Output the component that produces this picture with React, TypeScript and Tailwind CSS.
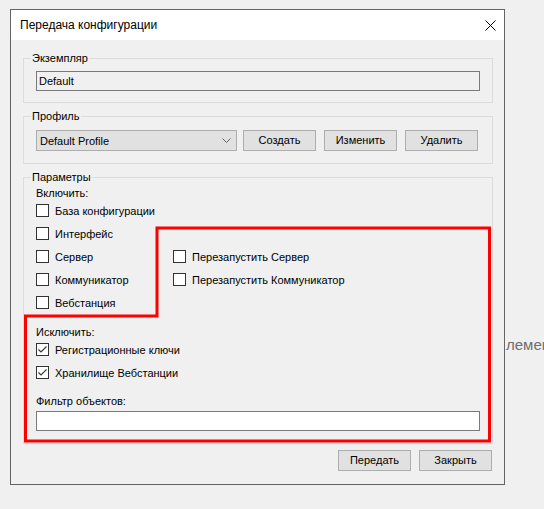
import type { ReactNode } from "react";

function GroupBox({ title, className, children }: { title: string; className: string; children: ReactNode }) {
  return (
    <div className={`relative border border-[#dcdcdc] ${className}`}>
      <span className="absolute -top-[8px] left-[7px] bg-[#f0f0f0] px-[1px] leading-[14px]">{title}</span>
      {children}
    </div>
  );
}

function Button({ label, className = "" }: { label: string; className?: string }) {
  return (
    <button className={`h-[21px] w-[73px] border border-[#adadad] bg-[#e1e1e1] text-center leading-[19px] ${className}`}>
      {label}
    </button>
  );
}

function CheckBox({ label, checked = false }: { label: string; checked?: boolean }) {
  return (
    <label className="flex h-[23px] items-center gap-[6px]">
      <span className="flex h-[13px] w-[13px] items-center justify-center border border-[#333333] bg-white">
        {checked && (
          <svg width="11" height="11" viewBox="0 0 11 11">
            <path d="M1.5 5.5 L4 8 L9.5 2.5" fill="none" stroke="#3c3c3c" strokeWidth="1.2" />
          </svg>
        )}
      </span>
      <span className="leading-[14px]">{label}</span>
    </label>
  );
}

export default function App() {
  return (
    <div className="relative flex h-[509px] w-[544px] overflow-hidden bg-[#f0f0f0] font-['Liberation_Sans',sans-serif] text-[11px] text-black">
      <div className="ml-[10px] mt-[9px] flex h-[476px] w-[495px] shrink-0 flex-col border border-[#646464] bg-[#f0f0f0]">
        {/* title bar */}
        <div className="flex h-[30px] items-center justify-between bg-white pl-[9px] pr-[8px]">
          <span className="text-[12px]">Передача конфигурации</span>
          <svg width="11" height="11" viewBox="0 0 11 11">
            <path d="M0.5 0.5 L10.5 10.5 M10.5 0.5 L0.5 10.5" stroke="#000" strokeWidth="1" />
          </svg>
        </div>

        <div className="flex flex-col pl-[12px] pr-[11px] pt-[18px]">
          <GroupBox title="Экземпляр" className="h-[45px] px-[12px] pt-[12px]">
            <div className="flex h-[20px] items-center border border-[#7a7a7a] bg-[#f0f0f0] pl-[2px] leading-[14px]">
              Default
            </div>
          </GroupBox>

          <GroupBox title="Профиль" className="mt-[13px] h-[48px] px-[12px] pt-[13px]">
            <div className="flex">
              <div className="flex h-[21px] w-[201px] items-center justify-between border border-[#adadad] bg-[#e1e1e1] pl-[3px] pr-[5px]">
                <span className="leading-[14px]">Default Profile</span>
                <svg width="9" height="6" viewBox="0 0 9 6">
                  <path d="M0.5 0.5 L4.5 4.5 L8.5 0.5" fill="none" stroke="#606060" strokeWidth="1" />
                </svg>
              </div>
              <Button label="Создать" className="ml-[6px]" />
              <Button label="Изменить" className="ml-[8px]" />
              <Button label="Удалить" className="ml-[8px]" />
            </div>
          </GroupBox>

          <GroupBox title="Параметры" className="mt-[13px] h-[267px] px-[12px] pt-[9px]">
            <div className="leading-[12px]">Включить:</div>
            <div className="flex">
              <div className="flex w-[137px] flex-col">
                <CheckBox label="База конфигурации" />
                <CheckBox label="Интерфейс" />
                <CheckBox label="Сервер" />
                <CheckBox label="Коммуникатор" />
                <CheckBox label="Вебстанция" />
              </div>
              <div className="flex flex-col pt-[46px]">
                <CheckBox label="Перезапустить Сервер" />
                <CheckBox label="Перезапустить Коммуникатор" />
              </div>
            </div>
            <div className="mt-[12px] leading-[12px]">Исключить:</div>
            <CheckBox label="Регистрационные ключи" checked />
            <CheckBox label="Хранилище Вебстанции" checked />
            <div className="mt-[11px] leading-[12px]">Фильтр объектов:</div>
            <div className="mt-[4px] h-[20px] border border-[#7a7a7a] bg-white" />
          </GroupBox>

          <div className="mt-[6px] flex justify-end gap-[8px] pr-[1px]">
            <Button label="Передать" />
            <Button label="Закрыть" />
          </div>
        </div>
      </div>

      <div className="ml-[1px] mt-[336px] whitespace-nowrap text-[15px] leading-[18px] text-[#6d6d6d]">лемен</div>

      {/* red outline marking the option area */}
      <svg className="pointer-events-none absolute left-0 top-0" width="544" height="509" viewBox="0 0 544 509">
        <path
          d="M25.5 316 H157 V228 H489.5 V441 H25.5 Z"
          fill="none"
          stroke="#ff0000"
          strokeWidth="3"
        />
      </svg>
    </div>
  );
}
